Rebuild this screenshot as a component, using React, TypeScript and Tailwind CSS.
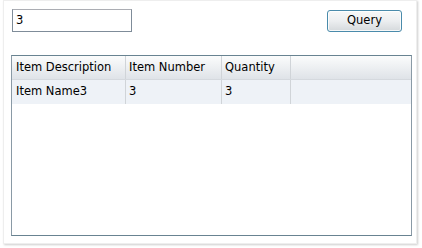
import React from "react";

export default function App() {
  const font = { fontFamily: "Tahoma, 'DejaVu Sans', Verdana, sans-serif" };
  return (
    <div className="w-[422px] h-[248px] bg-white relative" style={font}>
      <div className="ml-[3px] w-[414px] h-[244px] bg-white shadow-[1px_1px_2px_rgba(0,0,0,0.2)] border border-[#eeeeee] flex flex-col">
        <div className="flex items-start justify-between mt-[8px] ml-[8px] mr-[14px]">
          <div className="w-[120px] h-[23px] border border-[#7f8c99] border-t-[#abadb3] bg-white flex items-center pl-[3px] text-[11.5px] text-black">
            3
          </div>
          <button className="mt-[1px] w-[75px] h-[22px] rounded-[3px] border border-[#4a8bab] bg-gradient-to-b from-[#f7f8f8] via-[#eceef0] to-[#d5d9dc] text-[11.5px] text-black flex items-center justify-center shadow-[inset_0_0_0_1px_rgba(255,255,255,0.8)]">
            Query
          </button>
        </div>
        <div className="mt-[23px] ml-[7px] w-[401px] h-[181px] border border-[#688391] border-l-[#8a9aa6] border-r-[#8a9aa6] bg-white flex flex-col">
          <div className="flex h-[24px] bg-gradient-to-b from-[#fbfcfc] to-[#dfe3e8] border-b border-[#d5d9de] text-[11.5px] text-black">
            <div className="w-[114px] border-r border-[#d0d4d8] flex items-center pl-[4px]">Item Description</div>
            <div className="w-[96px] border-r border-[#d0d4d8] flex items-center pl-[3px]">Item Number</div>
            <div className="w-[69px] border-r border-[#d0d4d8] flex items-center pl-[3px]">Quantity</div>
            <div className="flex-1" />
          </div>
          <div className="flex h-[24px] bg-[#eef2f7] text-[11.5px] text-black">
            <div className="w-[114px] border-r border-[#d0d4d8] flex items-center pl-[4px]">Item Name3</div>
            <div className="w-[96px] border-r border-[#d0d4d8] flex items-center pl-[3px]">3</div>
            <div className="w-[69px] border-r border-[#d0d4d8] flex items-center pl-[3px]">3</div>
            <div className="flex-1" />
          </div>
        </div>
      </div>
    </div>
  );
}
